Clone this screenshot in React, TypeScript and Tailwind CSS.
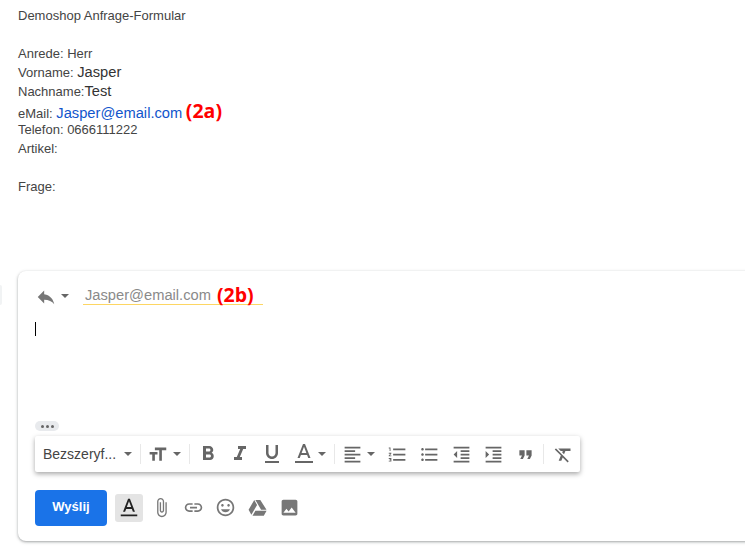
import React from 'react'

const P = {
  reply: 'M10 9V5l-7 7 7 7v-4.1c5 0 8.5 1.6 11 5.1-1-5-4-10-11-11z',
  size: 'M9 4v3h5v12h3V7h5V4H9zm-6 8h3v7h3v-7h3V9H3v3z',
  bold: 'M15.6 10.79c.97-.67 1.65-1.77 1.65-2.79 0-2.26-1.75-4-4-4H7v14h7.04c2.09 0 3.71-1.7 3.71-3.79 0-1.52-.86-2.82-2.15-3.42zM10 6.5h3c.83 0 1.5.67 1.5 1.5s-.67 1.5-1.5 1.5h-3v-3zm3.5 9H10v-3h3.5c.83 0 1.5.67 1.5 1.5s-.67 1.5-1.5 1.5z',
  italic: 'M10 4v3h2.21l-3.42 8H6v3h8v-3h-2.21l3.42-8H18V4z',
  underline: 'M12 17c3.31 0 6-2.69 6-6V3h-2.5v8c0 1.93-1.57 3.5-3.5 3.5S8.5 12.93 8.5 11V3H6v8c0 3.31 2.69 6 6 6zm-7 2v2h14v-2H5z',
  color: 'M11 2L5.5 16h2.25l1.12-3h6.25l1.12 3h2.25L13 2h-2zM9.62 11L12 4.67 14.38 11H9.62zM3 19h18v2H3z',
  align: 'M15 15H3v2h12v-2zm0-8H3v2h12V7zM3 13h18v-2H3v2zm0 8h18v-2H3v2zM3 3v2h18V3H3z',
  numbered: 'M2 17h2v.5H3v1h1v.5H2v1h3v-4H2v1zm1-9h1V4H2v1h1v3zm-1 3h1.8L2 13.1v.9h3v-1H3.2L5 10.9V10H2v1zm5-6v2h14V5H7zm0 14h14v-2H7v2zm0-6h14v-2H7v2z',
  bulleted: 'M4 10.5c-.83 0-1.5.67-1.5 1.5s.67 1.5 1.5 1.5 1.5-.67 1.5-1.5-.67-1.5-1.5-1.5zm0-6c-.83 0-1.5.67-1.5 1.5S3.17 7.5 4 7.5 5.5 6.83 5.5 6 4.83 4.5 4 4.5zm0 12c-.83 0-1.5.68-1.5 1.5s.68 1.5 1.5 1.5 1.5-.68 1.5-1.5-.67-1.5-1.5-1.5zM7 19h14v-2H7v2zm0-6h14v-2H7v2zm0-8v2h14V5H7z',
  outdent: 'M11 17h10v-2H11v2zm-8-5l4 4V8l-4 4zm0 9h18v-2H3v2zM3 3v2h18V3H3zm8 6h10V7H11v2zm0 4h10v-2H11v2z',
  indent: 'M3 21h18v-2H3v2zM3 8v8l4-4-4-4zm8 9h10v-2H11v2zM3 3v2h18V3H3zm8 6h10V7H11v2zm0 4h10v-2H11v2z',
  quote: 'M6 17h3l2-4V7H5v6h3zm8 0h3l2-4V7h-6v6h3z',
  clear: 'M3.27 5L2 6.27l6.97 6.97L6.5 19h3l1.57-3.66L16.73 21 18 19.73 3.55 5.27 3.27 5zM6 5v.18L8.82 8h2.4l-.72 1.68 2.1 2.1L14.21 8H20V5H6z',
  attach: 'M16.5 6v11.5c0 2.21-1.79 4-4 4s-4-1.79-4-4V5c0-1.38 1.12-2.5 2.5-2.5s2.5 1.12 2.5 2.5v10.5c0 .55-.45 1-1 1s-1-.45-1-1V6H10v9.5c0 1.38 1.12 2.5 2.5 2.5s2.5-1.12 2.5-2.5V5c0-2.21-1.79-4-4-4S7 2.79 7 5v12.5c0 3.04 2.46 5.5 5.5 5.5s5.5-2.46 5.5-5.5V6h-1.5z',
  link: 'M3.9 12c0-1.71 1.39-3.1 3.1-3.1h4V7H7c-2.76 0-5 2.24-5 5s2.24 5 5 5h4v-1.9H7c-1.71 0-3.1-1.39-3.1-3.1zM8 13h8v-2H8v2zm9-6h-4v1.9h4c1.71 0 3.1 1.39 3.1 3.1s-1.39 3.1-3.1 3.1h-4V17h4c2.76 0 5-2.24 5-5s-2.24-5-5-5z',
  emoji: 'M11.99 2C6.47 2 2 6.48 2 12s4.47 10 9.99 10C17.52 22 22 17.52 22 12S17.52 2 11.99 2zM12 20c-4.42 0-8-3.58-8-8s3.58-8 8-8 8 3.58 8 8-3.58 8-8 8zm3.5-9c.83 0 1.5-.67 1.5-1.5S16.33 8 15.5 8 14 8.67 14 9.5s.67 1.5 1.5 1.5zm-7 0c.83 0 1.5-.67 1.5-1.5S9.33 8 8.5 8 7 8.67 7 9.5 7.67 11 8.5 11zm3.5 6.5c2.33 0 4.31-1.46 5.11-3.5H6.89c.8 2.04 2.78 3.5 5.11 3.5z',
  drive: 'M8.3 3.5L1.8 14.7l3.2 5.6 6.5-11.2L8.3 3.5zM15.2 3.5H9.6l6.5 11.2h6.2L15.2 3.5zM9.6 15.7l-3.3 5.6h12.9l3.2-5.6H9.6z',
  image: 'M21 19V5c0-1.1-.9-2-2-2H5c-1.1 0-2 .9-2 2v14c0 1.1.9 2 2 2h14c1.1 0 2-.9 2-2zM8.5 13.5l2.5 3.01L14.5 12l4.5 6H5l3.5-4.5z',
}

function Icon({ d, className = 'size-[21px] fill-[#666]' }: { d: string; className?: string }) {
  return (
    <svg viewBox="0 0 24 24" className={className}>
      <path d={d} />
    </svg>
  )
}

function Caret({ className = '' }: { className?: string }) {
  return <span className={`h-0 w-0 border-x-4 border-t-4 border-x-transparent border-t-[#666] ${className}`} />
}

function ToolBtn({ d, className }: { d: string; className?: string }) {
  return (
    <span className="flex h-full w-8 items-center justify-center">
      <Icon d={d} className={className} />
    </span>
  )
}

function Divider() {
  return <span className="h-5 w-px bg-[#e8e8e8]" />
}

function Line({ children }: { children?: React.ReactNode }) {
  return <div className="h-[19px] text-[13px] leading-[19px] text-[#444]">{children}</div>
}

export default function App() {
  return (
    <div className="h-[559px] w-[745px] overflow-hidden bg-white font-['Liberation_Sans',Arial,sans-serif]">
      <div className="pl-[18px] pt-[6px]">
        <Line>Demoshop Anfrage-Formular</Line>
        <Line />
        <Line>Anrede: Herr</Line>
        <Line>
          Vorname: <span className="text-[14.7px] leading-none text-[#333]">Jasper</span>
        </Line>
        <Line>
          Nachname:<span className="text-[14.7px] leading-none text-[#333]">Test</span>
        </Line>
        <Line>
          eMail: <span className="text-[14.7px] leading-none text-[#1155cc]">Jasper@email.com</span>{' '}
          <span className="font-['Open_Sans',sans-serif] text-[19.5px] font-bold leading-none text-[#f00]">(2a)</span>
        </Line>
        <Line>Telefon: 0666111222</Line>
        <Line>Artikel:</Line>
        <Line />
        <Line>Frage:</Line>
      </div>

      <div className="mt-[75px] flex items-start">
        <div className="mt-[14px] h-5 w-[2px] shrink-0 rounded-r-full bg-[#f1f3f4]" />
        <div className="ml-4 h-[270px] w-[760px] shrink-0 rounded-lg bg-white pl-[17px] shadow-[0_1px_2px_rgba(60,64,67,0.3),0_1px_3px_1px_rgba(60,64,67,0.15)]">
          <div className="flex h-[33px] items-start pt-[13px]">
            <Icon d={P.reply} className="mt-[2px] size-[22px] fill-[#777]" />
            <Caret className="ml-[4px] mt-[10px]" />
            <div className="ml-[14px] flex h-[21px] w-[180px] items-center gap-[6px] border-b border-[#fdd663] pl-[2px] pt-[2px]">
              <span className="text-[14.7px] text-[#8a8a8a]">Jasper@email.com</span>
              <span className="font-['Open_Sans',sans-serif] text-[19.5px] font-bold text-[#f00]">(2b)</span>
            </div>
          </div>

          <div className="mt-[18px] h-[14px] w-px bg-black" />

          <div className="mt-[85px] flex h-[10px] w-6 items-center justify-center gap-[2px] rounded-full bg-[#e8eaed]">
            <span className="size-[3px] rounded-full bg-[#666]" />
            <span className="size-[3px] rounded-full bg-[#666]" />
            <span className="size-[3px] rounded-full bg-[#666]" />
          </div>

          <div className="mt-[5px] flex h-[36px] w-[545px] items-center rounded-[2px] bg-white shadow-[0_2px_5px_rgba(0,0,0,0.35)]">
            <span className="ml-2 text-[14px] text-[#444]">Bezszeryf...</span>
            <Caret className="ml-[8px]" />
            <span className="ml-[8px]" />
            <Divider />
            <span className="flex h-full w-[27px] items-center justify-end">
              <Icon d={P.size} />
            </span>
            <Caret className="ml-[5px]" />
            <span className="ml-[8px]" />
            <Divider />
            <span className="ml-[2px]" />
            <ToolBtn d={P.bold} className="size-6 fill-[#666]" />
            <ToolBtn d={P.italic} className="size-6 fill-[#666]" />
            <ToolBtn d={P.underline} className="size-6 fill-[#666]" />
            <ToolBtn d={P.color} className="size-6 fill-[#666]" />
            <Caret className="-ml-[2px]" />
            <span className="ml-[8px]" />
            <Divider />
            <span className="ml-[4px]" />
            <span className="flex h-full w-[24px] items-center justify-end">
              <Icon d={P.align} />
            </span>
            <Caret className="ml-[4px]" />
            <span className="ml-[6px]" />
            <ToolBtn d={P.numbered} />
            <ToolBtn d={P.bulleted} />
            <ToolBtn d={P.outdent} />
            <ToolBtn d={P.indent} />
            <ToolBtn d={P.quote} />
            <span className="ml-[2px]" />
            <Divider />
            <span className="ml-[3px]" />
            <ToolBtn d={P.clear} />
          </div>

          <div className="mt-[18px] flex items-center">
            <div className="flex h-9 w-[72px] items-center justify-center rounded bg-[#1a73e8] pb-[2px] text-[13px] font-bold text-white">
              Wyślij
            </div>
            <div className="ml-2 flex size-7 items-center justify-center rounded-[3px] bg-[#e4e4e4]">
              <Icon d={P.color} className="size-[22px] fill-[#222]" />
            </div>
            <div className="ml-[2px] flex pb-[1px]">
              <ToolBtn d={P.attach} className="size-[21px] fill-[#777]" />
              <ToolBtn d={P.link} className="size-[21px] fill-[#777]" />
              <ToolBtn d={P.emoji} className="size-[21px] fill-[#777]" />
              <ToolBtn d={P.drive} className="size-[21px] fill-[#777]" />
              <ToolBtn d={P.image} className="size-[21px] fill-[#777]" />
            </div>
          </div>
        </div>
      </div>
    </div>
  )
}
